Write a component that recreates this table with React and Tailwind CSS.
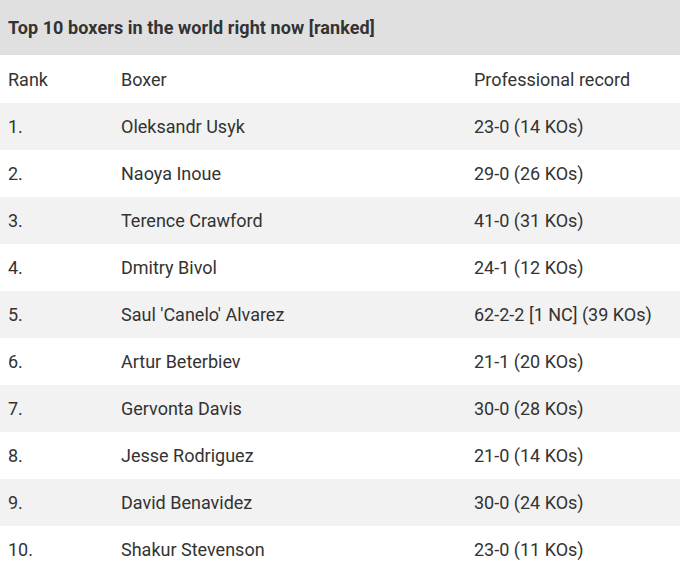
import React from "react";

const rows = [
  ["1.", "Oleksandr Usyk", "23-0 (14 KOs)"],
  ["2.", "Naoya Inoue", "29-0 (26 KOs)"],
  ["3.", "Terence Crawford", "41-0 (31 KOs)"],
  ["4.", "Dmitry Bivol", "24-1 (12 KOs)"],
  ["5.", "Saul 'Canelo' Alvarez", "62-2-2 [1 NC] (39 KOs)"],
  ["6.", "Artur Beterbiev", "21-1 (20 KOs)"],
  ["7.", "Gervonta Davis", "30-0 (28 KOs)"],
  ["8.", "Jesse Rodriguez", "21-0 (14 KOs)"],
  ["9.", "David Benavidez", "30-0 (24 KOs)"],
  ["10.", "Shakur Stevenson", "23-0 (11 KOs)"],
];

export default function App() {
  return (
    <div className="w-[680px] h-[585px] bg-white text-[#333] font-['Roboto',sans-serif]">
      <div className="h-[55px] bg-[#e0e0e0] flex items-center px-2 text-[18px] font-bold tracking-[0.08px]">
        Top 10 boxers in the world right now [ranked]
      </div>
      <div className="h-[48px] flex items-center text-[18px]">
        <div className="w-[121px] pl-2">Rank</div>
        <div className="w-[353px]">Boxer</div>
        <div>Professional record</div>
      </div>
      {rows.map((r, i) => (
        <div
          key={i}
          className={`h-[47px] flex items-center text-[18px] ${i % 2 === 0 ? "bg-[#f2f2f2]" : "bg-white"}`}
        >
          <div className="w-[121px] pl-2">{r[0]}</div>
          <div className="w-[353px]">{r[1]}</div>
          <div>{r[2]}</div>
        </div>
      ))}
    </div>
  );
}
